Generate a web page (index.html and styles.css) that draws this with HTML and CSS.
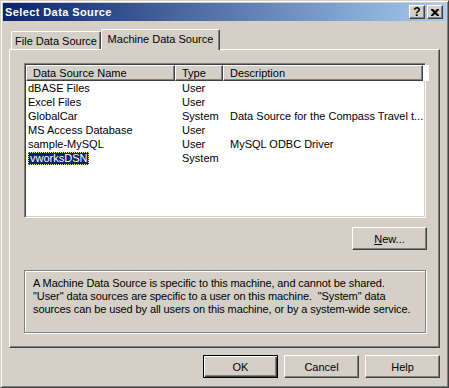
FILE: index.html
```html
<!DOCTYPE html>
<html lang="en">

<head>
    <meta charset="UTF-8">
    <title>Select Data Source</title>
    <link rel="stylesheet" href="styles.css">
</head>

<body>
    <div class="window">
        <div class="titlebar">
            <span class="title">Select Data Source</span>
            <span class="tbtn help">?</span>
            <span class="tbtn close">
                <svg width="8" height="7" viewBox="0 0 8 7">
                    <path d="M0 0h2l2 2l2-2h2v1l-2.5 2.5l2.5 2.5v1h-2l-2-2l-2 2h-2v-1l2.5-2.5l-2.5-2.5z" fill="#000"/>
                </svg>
            </span>
        </div>

        <div class="client">
            <div class="tabs">
                <div class="tab">File Data Source</div>
                <div class="tab active">Machine Data Source</div>
            </div>

            <div class="panel">
                <div class="list">
                    <div class="row head">
                        <div class="hcell name">Data Source Name</div>
                        <div class="hcell">Type</div>
                        <div class="hcell">Description</div>
                        <div class="hcell rest"></div>
                    </div>
                    <div class="row">
                        <div class="cell name">dBASE Files</div>
                        <div class="cell">User</div>
                        <div class="cell"></div>
                    </div>
                    <div class="row">
                        <div class="cell name">Excel Files</div>
                        <div class="cell">User</div>
                        <div class="cell"></div>
                    </div>
                    <div class="row">
                        <div class="cell name">GlobalCar</div>
                        <div class="cell">System</div>
                        <div class="cell">Data Source for the Compass Travel t...</div>
                    </div>
                    <div class="row">
                        <div class="cell name">MS Access Database</div>
                        <div class="cell">User</div>
                        <div class="cell"></div>
                    </div>
                    <div class="row">
                        <div class="cell name">sample-MySQL</div>
                        <div class="cell">User</div>
                        <div class="cell">MySQL ODBC Driver</div>
                    </div>
                    <div class="row">
                        <div class="cell name"><span class="selected">vworksDSN</span></div>
                        <div class="cell">System</div>
                        <div class="cell"></div>
                    </div>
                </div>

                <div class="newrow">
                    <button class="btn"><u>N</u>ew...</button>
                </div>

                <div class="groupbox">
                    A Machine Data Source is specific to this machine, and cannot be shared.<br>
                    "User" data sources are specific to a user on this machine.&nbsp; "System" data<br>
                    sources can be used by all users on this machine, or by a system-wide service.
                </div>
            </div>

            <div class="buttons">
                <button class="btn default">OK</button>
                <button class="btn">Cancel</button>
                <button class="btn">Help</button>
            </div>
        </div>
    </div>
</body>

</html>
```

FILE: styles.css
```css
* {
    box-sizing: border-box;
}

body {
    margin: 0;
    background: #d4d0c8;
    color: #000;
    font-family: "Liberation Sans", Arial, sans-serif;
    font-size: 11px;
}

.window {
    width: 449px;
    height: 388px;
    padding: 2px;
    border: 1px solid;
    border-color: #d4d0c8 #404040 #404040 #d4d0c8;
    box-shadow: inset 1px 1px #fff, inset -1px -1px #808080;
    display: flex;
    flex-direction: column;
}

.titlebar {
    height: 18px;
    padding: 0 3px 0 2px;
    display: flex;
    align-items: center;
    background: linear-gradient(to right, #0a246a, #a6caf0);
    color: #fff;
    font-weight: bold;
}

.title {
    flex: 1;
    letter-spacing: 0.4px;
}

.tbtn {
    width: 16px;
    height: 14px;
    display: flex;
    align-items: center;
    justify-content: center;
    background: #d4d0c8;
    border: 1px solid;
    border-color: #fff #404040 #404040 #fff;
    box-shadow: inset -1px -1px #808080;
    color: #000;
    font-size: 12px;
    line-height: 12px;
}

.help {
    margin-right: 2px;
}

.client {
    flex: 1;
    padding: 8px 6px 0;
}

.tabs {
    height: 20px;
    padding-left: 2px;
    display: flex;
    align-items: flex-end;
}

.tab {
    height: 18px;
    padding-top: 3px;
    text-align: center;
    border: 1px solid;
    border-bottom: 0;
    border-color: #fff #404040 #404040 #fff;
    box-shadow: inset -1px 0 #808080;
    border-radius: 2px 2px 0 0;
    width: 90px;
}

.tab.active {
    position: relative;
    height: 21px;
    margin-bottom: -1px;
    width: 119px;
    padding-top: 3px;
    background: #d4d0c8;
}

.panel {
    height: 299px;
    padding: 13px 14px 0;
    border: 1px solid;
    border-color: #fff #404040 #404040 #fff;
    box-shadow: inset -1px -1px #808080;
}

.list {
    width: 402px;
    height: 155px;
    background: #fff;
    border: 1px solid;
    border-color: #808080 #fff #fff #808080;
    box-shadow: inset 1px 1px #404040, inset -1px -1px #d4d0c8;
    padding: 1px;
}

.row {
    display: grid;
    grid-template-columns: 149px 48px 1fr;
    height: 14px;
    line-height: 14px;
}

.row.head {
    grid-template-columns: 149px 48px 200px 1fr;
    height: 16px;
    line-height: 14px;
}

.hcell {
    background: #d4d0c8;
    padding-left: 6px;
    border: 1px solid;
    border-color: #fff #404040 #404040 #fff;
    box-shadow: inset -1px -1px #808080;
    white-space: nowrap;
}

.hcell.rest {
    border: 0;
    box-shadow: none;
    background: #fff;
}

.cell {
    padding-left: 7px;
    white-space: nowrap;
    overflow: hidden;
}

.cell.name {
    padding-left: 2px;
}

.selected {
    display: inline-block;
    height: 13px;
    line-height: 11px;
    padding: 0 1px;
    background: #0a246a;
    color: #fff;
    border: 1px dotted #f2e8a0;
    vertical-align: top;
    margin-top: 1px;
}

.newrow {
    display: flex;
    justify-content: flex-end;
    width: 403px;
    margin-top: 9px;
}

.btn {
    width: 75px;
    height: 23px;
    padding: 0;
    background: #d4d0c8;
    color: #000;
    font: inherit;
    border: 1px solid;
    border-color: #fff #404040 #404040 #fff;
    box-shadow: inset -1px -1px #808080;
}

.btn.default {
    border-color: #000;
    box-shadow: inset 1px 1px #fff, inset -1px -1px #404040, inset -2px -2px #808080;
}

.groupbox {
    width: 402px;
    height: 63px;
    margin-top: 20px;
    padding: 6px 8px 0;
    line-height: 13px;
    letter-spacing: -0.1px;
    white-space: nowrap;
    border: 1px solid #808080;
    box-shadow: inset 1px 1px #fff, 1px 1px #fff;
}

.buttons {
    display: flex;
    justify-content: flex-end;
    gap: 6px;
    margin-top: 7px;
}
```
